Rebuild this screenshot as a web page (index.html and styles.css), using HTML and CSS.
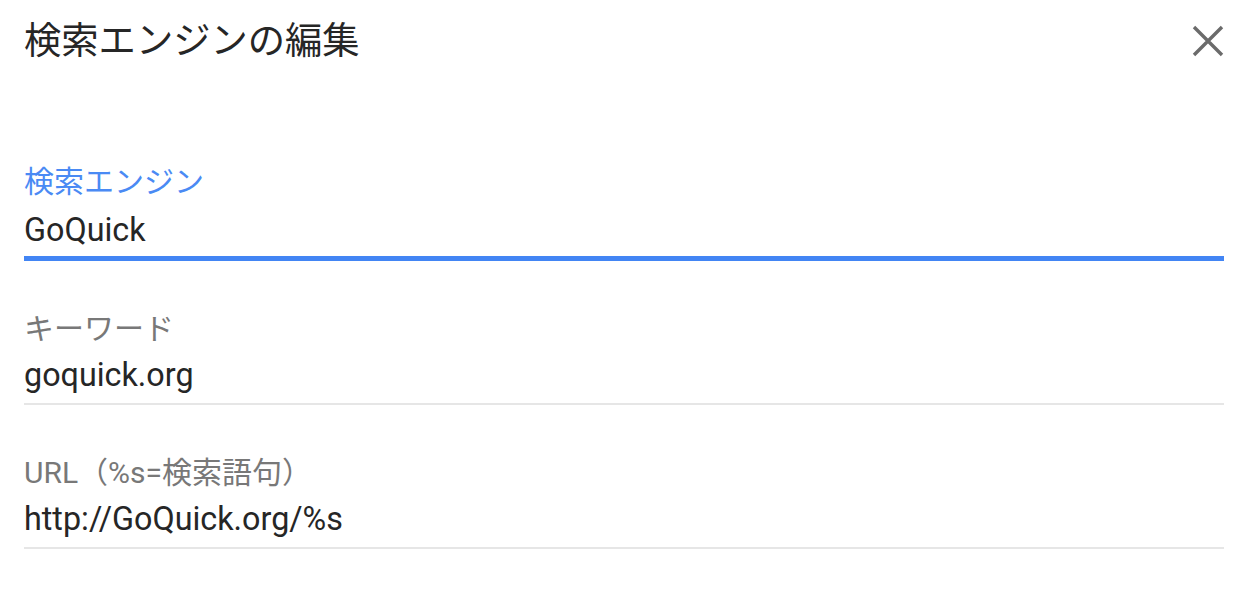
FILE: index.html
```html
<!DOCTYPE html>
<html lang="ja">
<head>
<meta charset="utf-8">
<title>検索エンジンの編集</title>
<link rel="stylesheet" href="styles.css">
</head>
<body>
<div class="dialog">
  <div class="header">
    <h1 class="title">検索エンジンの編集</h1>
    <button class="close" aria-label="閉じる">
      <svg width="34" height="34" viewBox="0 0 34 34"><path d="M3 3 L31 31 M31 3 L3 31" stroke="#6b6b6b" stroke-width="3.4" fill="none"/></svg>
    </button>
  </div>
  <div class="field focused">
    <div class="label">検索エンジン</div>
    <div class="value">GoQuick</div>
  </div>
  <div class="field">
    <div class="label">キーワード</div>
    <div class="value">goquick.org</div>
  </div>
  <div class="field">
    <div class="label">URL（%s=検索語句）</div>
    <div class="value">http://GoQuick.org/%s</div>
  </div>
</div>
</body>
</html>
```
FILE: styles.css
```css
html, body {
  margin: 0;
  padding: 0;
  background: #ffffff;
}
body {
  font-family: Roboto, "Noto Sans CJK JP", sans-serif;
  color: #262626;
}
.dialog {
  padding: 0 32px 0 24px;
}
.header {
  display: flex;
  justify-content: space-between;
  align-items: flex-start;
  height: 126px;
}
.title {
  margin: 0;
  padding-top: 19px;
  font-size: 37.3px;
  line-height: 44px;
  font-weight: 400;
  color: #262626;
}
.close {
  margin: 24px -1px 0 0;
  padding: 0;
  border: 0;
  background: transparent;
  width: 34px;
  height: 34px;
}
.close svg {
  display: block;
}
.field {
  display: flex;
  flex-direction: column;
  box-sizing: border-box;
  height: 144px;
  padding-top: 50px;
  border-bottom: 2px solid #e6e6e6;
}
.field.focused {
  height: 135px;
  padding-top: 38px;
  border-bottom: 5px solid #4285f4;
}
.label {
  font-size: 30px;
  line-height: 36px;
  color: #787878;
}
.focused .label {
  color: #4a8af4;
}
.value {
  margin-top: 8px;
  font-size: 32.3px;
  line-height: 40px;
  color: #262626;
}
.focused .value {
  margin-top: 10px;
}
```
